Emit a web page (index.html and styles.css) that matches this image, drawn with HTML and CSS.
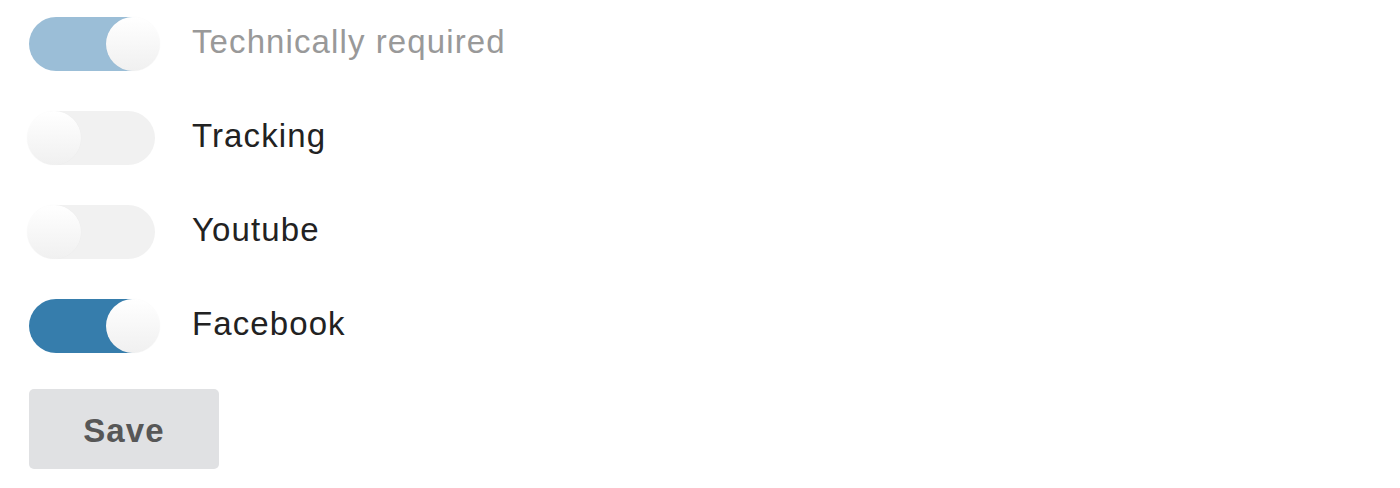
FILE: index.html
```html
<!DOCTYPE html>
<html lang="en">
<head>
<meta charset="utf-8">
<title>Cookie settings</title>
<link rel="stylesheet" href="styles.css">
</head>
<body>
<form class="consent">
  <div class="row">
    <span class="switch switch--on switch--disabled"><span class="knob"></span></span>
    <span class="label label--disabled">Technically required</span>
  </div>
  <div class="row">
    <span class="switch"><span class="knob"></span></span>
    <span class="label">Tracking</span>
  </div>
  <div class="row">
    <span class="switch"><span class="knob"></span></span>
    <span class="label">Youtube</span>
  </div>
  <div class="row">
    <span class="switch switch--on"><span class="knob"></span></span>
    <span class="label">Facebook</span>
  </div>
  <button type="button" class="save">Save</button>
</form>
</body>
</html>
```
FILE: styles.css
```css
html, body {
  margin: 0;
  padding: 0;
  background: #ffffff;
}
body {
  font-family: "Liberation Sans", Arial, sans-serif;
}
.consent {
  display: flex;
  flex-direction: column;
  align-items: flex-start;
  padding: 17px 0 0 29px;
  gap: 40px;
}
.row {
  display: flex;
  align-items: center;
  height: 54px;
}
.switch {
  position: relative;
  display: block;
  width: 126px;
  height: 54px;
  border-radius: 27px;
  background: #f1f1f1;
  flex: none;
}
.switch--on {
  background: #367dac;
}
.switch--on.switch--disabled {
  background: #9bbed7;
}
.knob {
  position: absolute;
  top: 0;
  left: -2px;
  width: 54px;
  height: 54px;
  border-radius: 50%;
  background: linear-gradient(to bottom, #ffffff 0%, #f0f0f0 100%);
  box-shadow: 0 0 1px rgba(0, 0, 0, 0.06);
}
.switch--on .knob {
  left: 77px;
}
.label {
  margin-left: 37px;
  padding-bottom: 5px;
  font-size: 33px;
  letter-spacing: 1.1px;
  color: #222222;
  white-space: nowrap;
}
.label--disabled {
  color: #999999;
}
.save {
  margin-top: -4px;
  width: 190px;
  height: 80px;
  border: none;
  border-radius: 5px;
  background: #e0e1e3;
  color: #575757;
  font-family: "Liberation Sans", Arial, sans-serif;
  font-weight: bold;
  font-size: 33px;
  letter-spacing: 1.1px;
  padding: 3px 0 0 0;
  cursor: pointer;
}
```
